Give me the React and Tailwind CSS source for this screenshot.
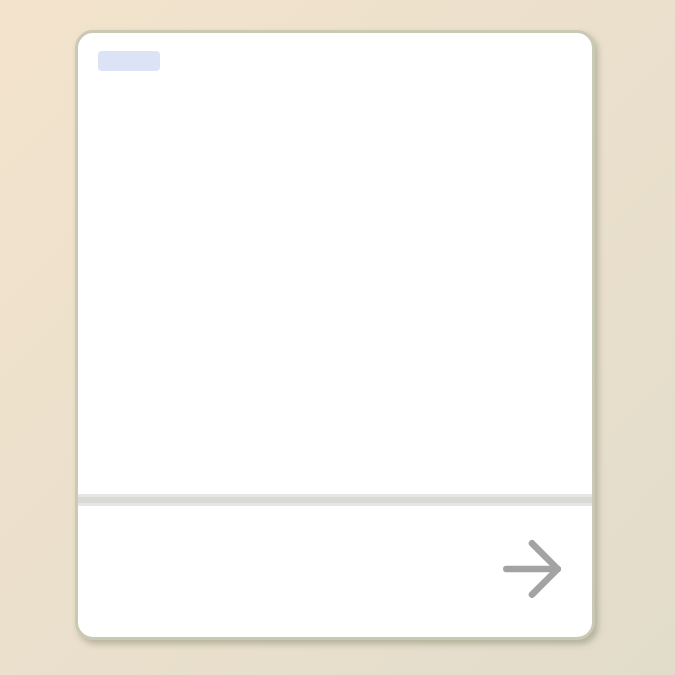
import { ArrowRight } from "lucide-react";

export default function App() {
  return (
    <div className="w-[675px] h-[675px] bg-gradient-to-br from-[#f3e3cc] via-[#ebe0cc] to-[#e2dccb] pt-[30px] pl-[75px]">
      {/* Card */}
      <div className="w-[520px] h-[610px] flex flex-col rounded-[18px] bg-white border-[3px] border-[#c9c9b4] shadow-[3px_4px_6px_rgba(120,125,95,0.45)] overflow-hidden">
        {/* Body */}
        <div className="flex-1 px-[20px] pt-[18px]">
          <div className="w-[62px] h-[20px] rounded-[4px] bg-[#dce3f6]" />
        </div>
        {/* Divider */}
        <div className="h-[12px] bg-[#d9d9d5] border-y-[3px] border-[#e6e6e2]" />
        {/* Footer */}
        <div className="h-[131px] flex items-center justify-end pr-[16px] pb-[6px]">
          <ArrowRight size={88} strokeWidth={1.8} color="#a3a3a3" />
        </div>
      </div>
    </div>
  );
}
